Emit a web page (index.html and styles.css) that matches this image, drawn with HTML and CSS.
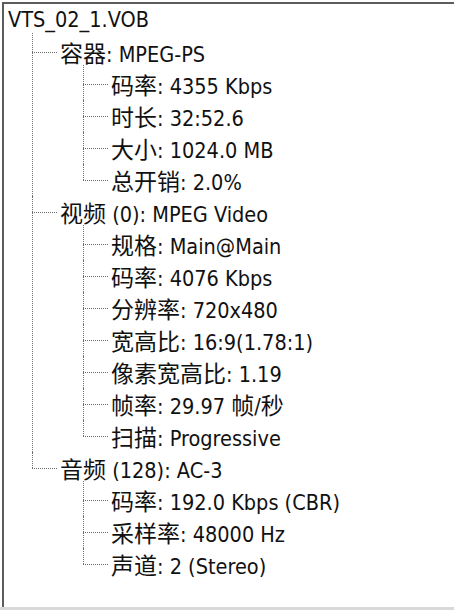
FILE: index.html
```html
<!DOCTYPE html>
<html lang="zh">
<head>
<meta charset="utf-8">
<title>VTS_02_1.VOB</title>
<link rel="stylesheet" href="styles.css">
</head>
<body>
<div class="frame">
  <ul class="tree">
    <li class="root">
      <div class="row">VTS_02_1.VOB</div>
      <ul>
        <li>
          <div class="row"><span class="zh">容器</span>: MPEG-PS</div>
          <ul>
            <li><div class="row"><span class="zh">码率</span>: 4355 Kbps</div></li>
            <li><div class="row"><span class="zh">时长</span>: 32:52.6</div></li>
            <li><div class="row"><span class="zh">大小</span>: 1024.0 MB</div></li>
            <li><div class="row"><span class="zh">总开销</span>: 2.0%</div></li>
          </ul>
        </li>
        <li>
          <div class="row"><span class="zh">视频</span> (0): MPEG Video</div>
          <ul>
            <li><div class="row"><span class="zh">规格</span>: Main@Main</div></li>
            <li><div class="row"><span class="zh">码率</span>: 4076 Kbps</div></li>
            <li><div class="row"><span class="zh">分辨率</span>: 720x480</div></li>
            <li><div class="row"><span class="zh">宽高比</span>: 16:9(1.78:1)</div></li>
            <li><div class="row"><span class="zh">像素宽高比</span>: 1.19</div></li>
            <li><div class="row"><span class="zh">帧率</span>: 29.97 <span class="zh">帧</span>/<span class="zh">秒</span></div></li>
            <li><div class="row"><span class="zh">扫描</span>: Progressive</div></li>
          </ul>
        </li>
        <li>
          <div class="row"><span class="zh">音频</span> (128): AC-3</div>
          <ul>
            <li><div class="row"><span class="zh">码率</span>: 192.0 Kbps (CBR)</div></li>
            <li><div class="row"><span class="zh">采样率</span>: 48000 Hz</div></li>
            <li><div class="row"><span class="zh">声道</span>: 2 (Stereo)</div></li>
          </ul>
        </li>
      </ul>
    </li>
  </ul>
</div>
<div class="bottom"></div>
</body>
</html>
```
FILE: styles.css
```css
html, body {
  margin: 0;
  padding: 0;
  background: #ffffff;
}
body {
  width: 454px;
  height: 610px;
  overflow: hidden;
  font-family: "DejaVu Sans Condensed", "DejaVu Sans", "Noto Sans CJK SC", sans-serif;
  font-stretch: condensed;
  font-size: 21.5px;
  color: #111111;
}
.frame {
  margin: 2px 0 0 2px;
  border-top: 2px solid #5c5c5c;
  border-left: 2px solid #5c5c5c;
  height: 603px;
  padding-left: 4px;
  box-sizing: content-box;
  overflow: hidden;
}
.bottom {
  height: 3px;
  background: #d9d9d9;
}
.tree, .tree ul {
  list-style: none;
  margin: 0;
  padding: 0;
}
.tree ul {
  padding-left: 52px;
}
.tree ul ul {
  padding-left: 51px;
}
.tree li {
  position: relative;
}
.row {
  height: 32px;
  line-height: 32px;
  white-space: nowrap;
}
.zh {
  font-family: "Noto Sans CJK SC", sans-serif;
  font-stretch: normal;
  font-size: 23px;
}
.tree ul > li::before {
  content: "";
  position: absolute;
  left: -28px;
  top: 0;
  bottom: 0;
  border-left: 1px dotted #6e6e6e;
}
.tree ul > li:first-child::before {
  top: -3px;
}
.tree ul > li:last-child::before {
  bottom: auto;
  height: 16px;
}
.tree ul > li:first-child:last-child::before {
  height: 19px;
}
.tree ul > li::after {
  content: "";
  position: absolute;
  left: -28px;
  top: 16px;
  width: 25px;
  border-top: 1px dotted #6e6e6e;
}
```
